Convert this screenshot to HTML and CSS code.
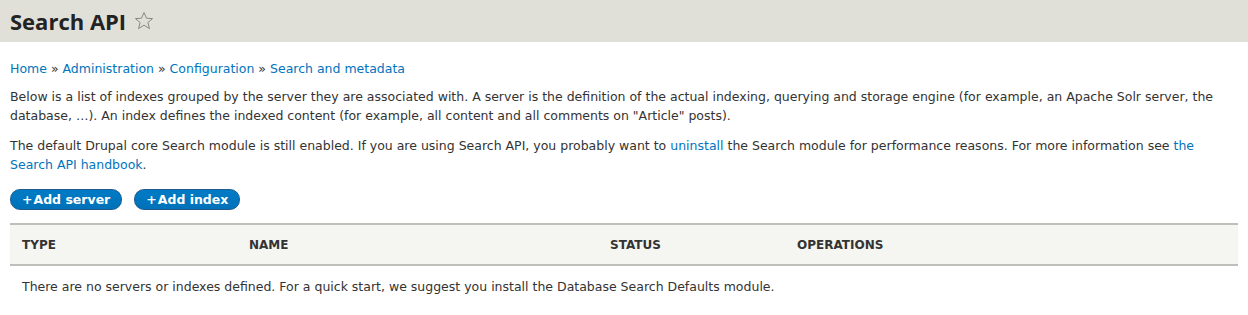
FILE: index.html
```html
<!DOCTYPE html>
<html lang="en">
<head>
    <meta charset="utf-8">
    <title>Search API</title>
    <link rel="stylesheet" href="styles.css">
</head>
<body>
    <header class="page-header">
        <h1 class="page-title">Search API
            <svg class="shortcut-star" width="20" height="20" viewBox="0 0 20 20">
                <path d="M10 1.5 12.5 7.2 18.6 7.6 13.9 11.5 15.5 17.6 10 14.2 4.5 17.6 6.1 11.5 1.4 7.6 7.5 7.2Z" fill="none" stroke="#8a8a80" stroke-width="1" stroke-linejoin="round"/>
            </svg>
        </h1>
    </header>

    <main class="content">
        <nav class="breadcrumb">
            <a href="#">Home</a> » <a href="#">Administration</a> » <a href="#">Configuration</a> » <a href="#">Search and metadata</a>
        </nav>

        <p>Below is a list of indexes grouped by the server they are associated with. A server is the definition of the actual indexing, querying and storage engine (for example, an Apache Solr server, the database, …). An index defines the indexed content (for example, all content and all comments on "Article" posts).</p>

        <p>The default Drupal core Search module is still enabled. If you are using Search API, you probably want to <a href="#">uninstall</a> the Search module for performance reasons. For more information see <a href="#">the Search API handbook</a>.</p>

        <div class="action-links">
            <a class="button-action" href="#"><span class="plus">+</span>Add server</a>
            <a class="button-action" href="#"><span class="plus">+</span>Add index</a>
        </div>

        <table class="overview">
            <thead>
                <tr>
                    <th class="col-type">Type</th>
                    <th class="col-name">Name</th>
                    <th class="col-status">Status</th>
                    <th>Operations</th>
                </tr>
            </thead>
            <tbody>
                <tr>
                    <td colspan="4">There are no servers or indexes defined. For a quick start, we suggest you install the Database Search Defaults module.</td>
                </tr>
            </tbody>
        </table>
    </main>
</body>
</html>
```

FILE: styles.css
```css
:root {
    --link-blue: #0074bd;
    --dark-text: #333333;
    --header-bg: #e0e0d8;
    --table-head-bg: #f5f5f2;
    --table-border: #bfbfba;
}

body {
    margin: 0;
    font-family: "DejaVu Sans", "Liberation Sans", sans-serif;
    font-size: 12.5px;
    color: var(--dark-text);
    background: #ffffff;
}

a {
    color: var(--link-blue);
    text-decoration: none;
}

.page-header {
    background-color: var(--header-bg);
    height: 42px;
    padding: 0 10px;
    display: flex;
    align-items: center;
}

.page-title {
    margin: 0;
    font-family: "Open Sans", "DejaVu Sans", sans-serif;
    font-size: 22px;
    font-weight: bold;
    color: #232323;
    display: flex;
    align-items: center;
    gap: 8px;
}

.content {
    padding: 17px 10px 0;
}

.breadcrumb {
    line-height: 19px;
    margin-bottom: 9px;
}

p {
    margin: 0 0 11px;
    line-height: 19px;
}

.action-links {
    display: flex;
    gap: 12px;
    margin: 15px 0 13px;
}

.button-action {
    display: inline-block;
    height: 19px;
    line-height: 19px;
    padding: 0 11px;
    border-radius: 10px;
    background: linear-gradient(#007bc6, #0071b8);
    border: 1px solid #1e5c90;
    color: #ffffff;
    font-weight: bold;
    font-size: 12.5px;
}

.plus {
    margin-right: 1px;
}

.overview {
    width: 100%;
    border-collapse: collapse;
}

.overview th {
    background-color: var(--table-head-bg);
    border-top: 2px solid var(--table-border);
    border-bottom: 2px solid var(--table-border);
    text-align: left;
    text-transform: uppercase;
    font-size: 12px;
    height: 39px;
    padding: 0 12px;
    color: #333333;
}

.col-type { width: 203px; }
.col-name { width: 337px; }
.col-status { width: 163px; }

.overview td {
    padding: 11px 12px;
    line-height: 19px;
}
```
